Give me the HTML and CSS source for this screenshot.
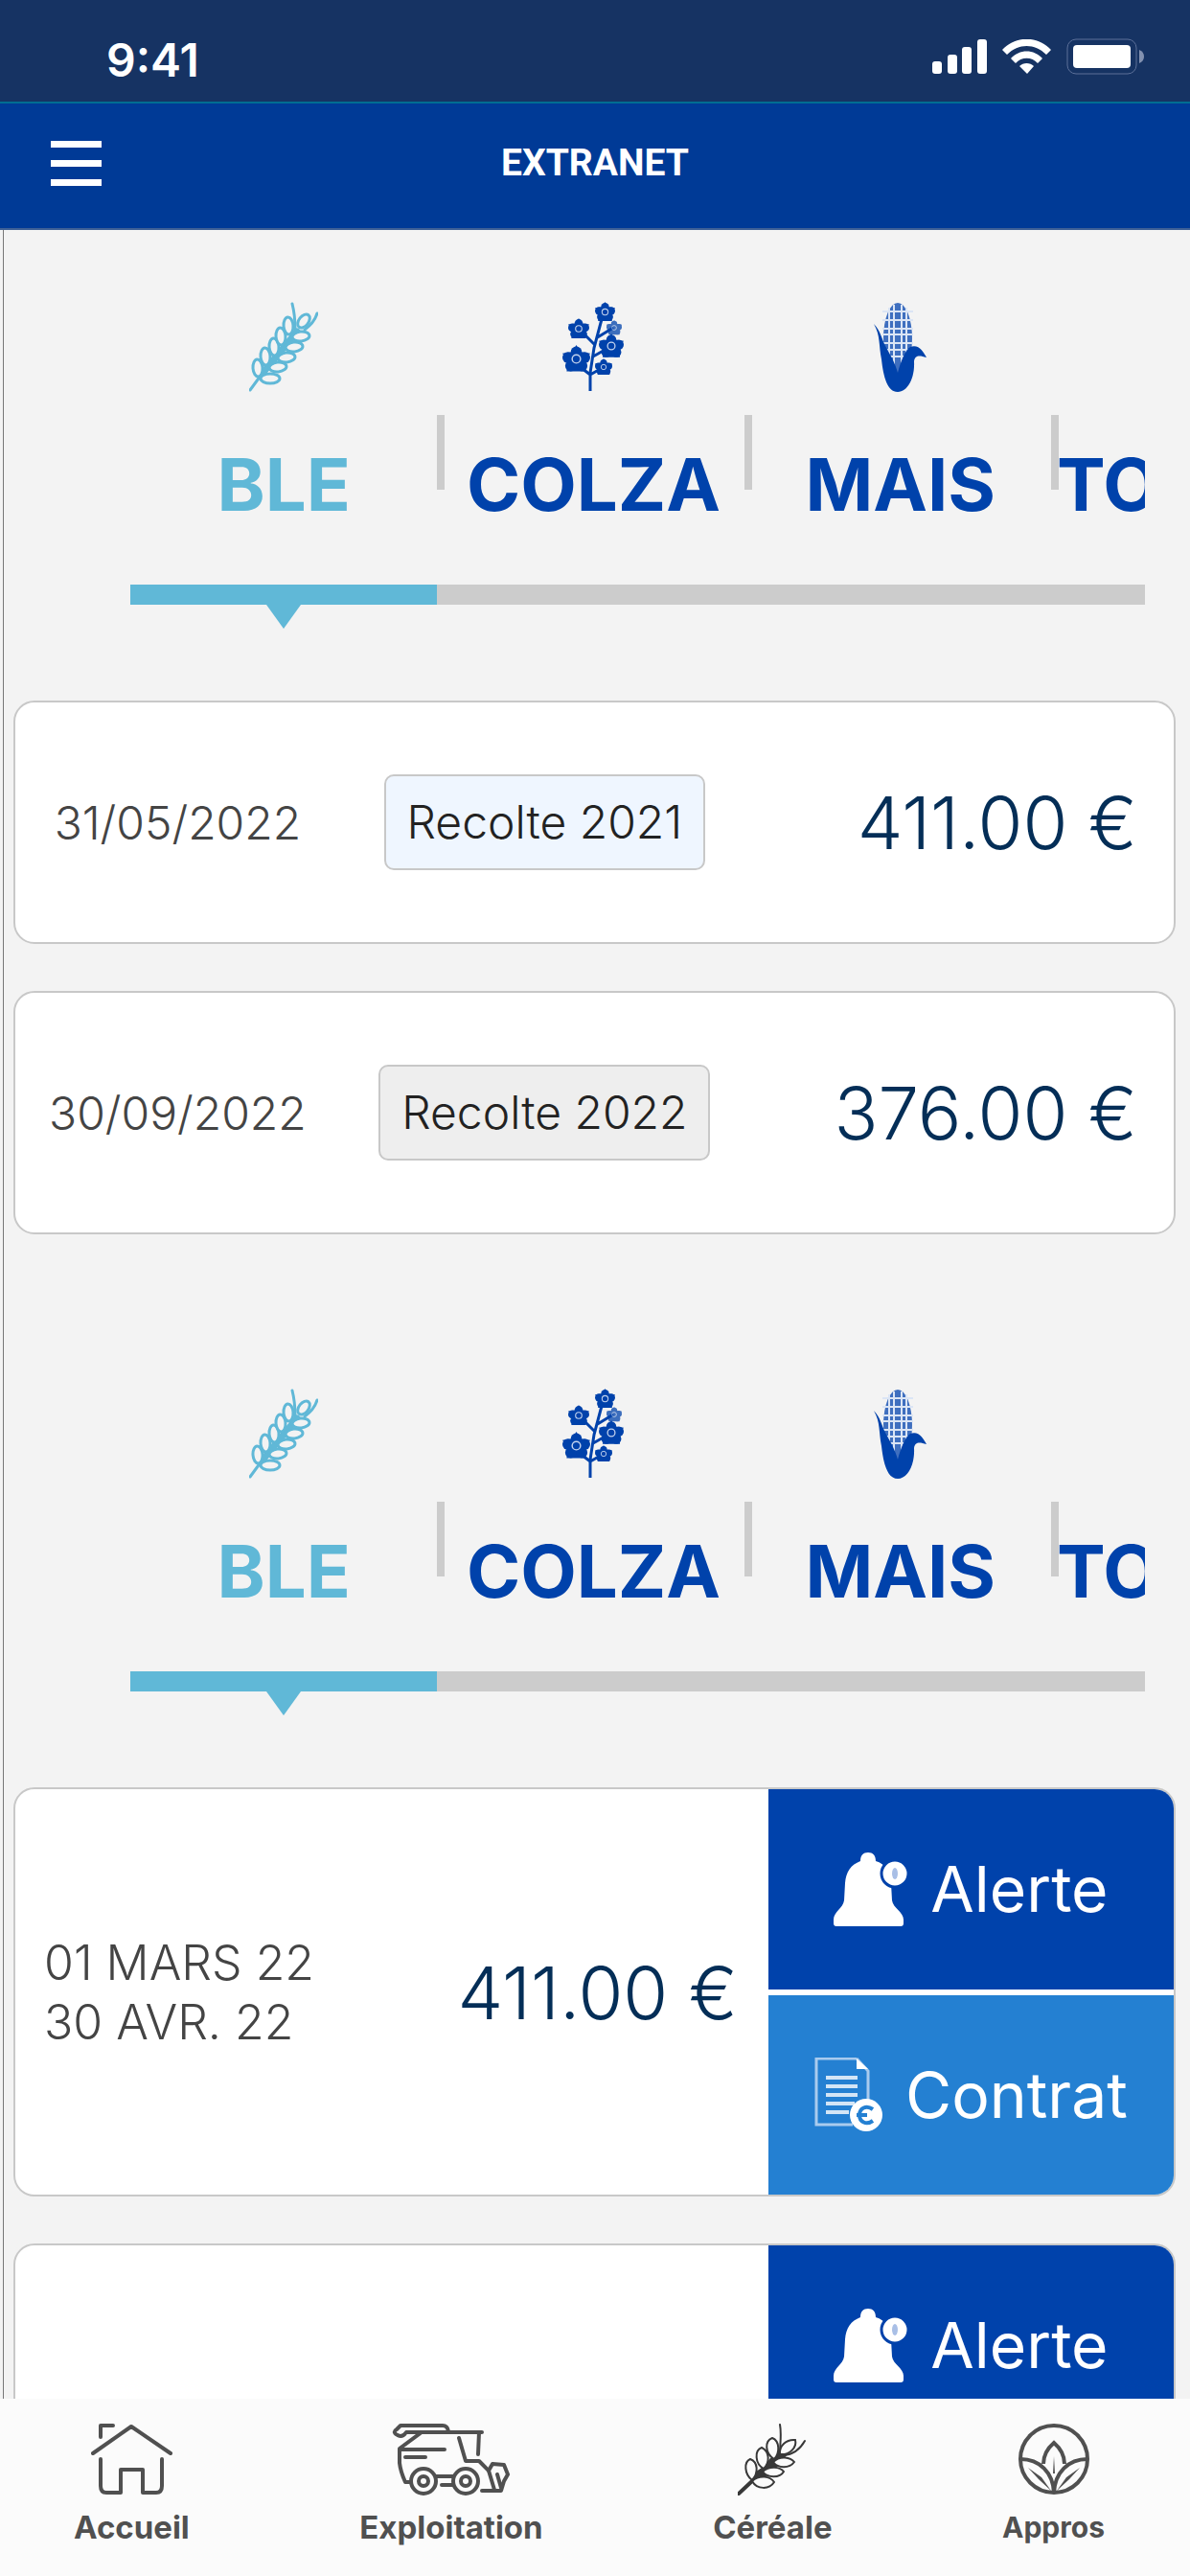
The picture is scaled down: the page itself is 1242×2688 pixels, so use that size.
FILE: index.html
```html
<!DOCTYPE html>
<html lang="fr">
<head>
<meta charset="utf-8">
<meta name="viewport" content="width=device-width, initial-scale=1">
<title>Extranet</title>
<link rel="stylesheet" href="styles.css">
</head>
<body>
<svg class="sprite" aria-hidden="true">
  <symbol id="wheat" viewBox="0 0 72 92">
    <g fill="none" stroke="currentColor" stroke-width="3" stroke-linecap="round">
      <path d="M1 91 12 76M45 1c2 8 3 16 3 26M71 11c-2 7-6 12-13 17"/>
      <path d="M12 76 50 30" stroke-width="7"/>
      <g fill="#f3f3f3">
        <ellipse cx="9" cy="68" rx="5" ry="9" transform="rotate(-4 9 68)"/>
        <ellipse cx="17" cy="56" rx="5" ry="9" transform="rotate(-4 17 56)"/>
        <ellipse cx="26" cy="46" rx="5" ry="9" transform="rotate(-4 26 46)"/>
        <ellipse cx="33" cy="35" rx="5" ry="9" transform="rotate(-4 33 35)"/>
        <ellipse cx="41" cy="24" rx="5" ry="9" transform="rotate(-4 41 24)"/>
        <ellipse cx="22" cy="79" rx="10" ry="5"/>
        <ellipse cx="30" cy="67" rx="9" ry="5" transform="rotate(-6 30 67)"/>
        <ellipse cx="39" cy="57" rx="9" ry="5" transform="rotate(-6 39 57)"/>
        <ellipse cx="47" cy="46" rx="9" ry="5" transform="rotate(-6 47 46)"/>
        <ellipse cx="54" cy="35" rx="9" ry="5" transform="rotate(-6 54 35)"/>
        <ellipse cx="57" cy="19" rx="5" ry="8" transform="rotate(38 57 19)"/>
      </g>
    </g>
  </symbol>
  <symbol id="flower" viewBox="-10 -10 20 20">
    <g fill="currentColor">
      <path d="M0-10 3-5 10-4 6 2 7 9H-7L-6 2-10-4-3-5Z"/>
      <circle cx="0" cy="-5" r="4"/><circle cx="6" cy="-1" r="4"/><circle cx="4" cy="5" r="4"/><circle cx="-4" cy="5" r="4"/><circle cx="-6" cy="-1" r="4"/>
    </g>
    <circle r="3" fill="none" stroke="#c3d3ee" stroke-width="1"/>
  </symbol>
  <symbol id="colza" viewBox="0 0 64 94">
    <path d="M29 93V74L33 48 41 18M29 76 16 66M29 76l14-8M32 57l16-9M34 45 18 29M35 38l18-11" fill="none" stroke="currentColor" stroke-width="3"/>
    <use href="#flower" x="34" y="0" width="21" height="21"/>
    <use href="#flower" x="6" y="17" width="22" height="22"/>
    <use href="#flower" x="46" y="19" width="16" height="16" opacity=".75"/>
    <use href="#flower" x="38" y="33" width="26" height="26"/>
    <use href="#flower" x="0" y="45" width="29" height="29"/>
    <use href="#flower" x="34" y="59" width="18" height="18"/>
  </symbol>
  <symbol id="corn" viewBox="0 0 55 94">
    <ellipse cx="25" cy="38" rx="15" ry="37" fill="#3f6fbf"/>
    <path d="M16 6v56M21 3v66M29 3v66M34 6v50M9 10h32M9 19h32M9 28h32M9 34h32M9 43h32M12 50h26M15 57h20" stroke="#dbe5f5" stroke-width="2" fill="none"/>
    <path fill="currentColor" d="M0 23C7 30 8 38 12 46 17 55 22 63 25 74 28 62 33 50 38 47c9-3 13 4 17 11-7-2-12-3-13 4 1 18-7 32-17 32-11 0-15-16-17-34C5 45 7 35 0 23Z"/>
  </symbol>
  <symbol id="bell" viewBox="0 0 77 77">
    <path fill="#fff" d="M36 0c5 0 8 3 8 9 10 3 16 11 16 23l1 18c1 8 12 12 12 20v4q0 3-3 3H3q-3 0-3-3v-4c0-8 10-12 11-20l1-18C13 20 18 13 28 9c0-6 3-9 8-9Z"/>
    <circle cx="64" cy="22" r="14" fill="#fff" stroke="#0042ab" stroke-width="3"/>
    <ellipse cx="64" cy="22" rx="3" ry="6" fill="#a9bfe6"/>
  </symbol>
  <symbol id="contract" viewBox="0 0 71 77">
    <path d="M44 1H2v69h38M44 1l12 13v34" fill="none" stroke="#a9cbee" stroke-width="3"/>
    <path d="M44 1v11h12Z" fill="#fff"/>
    <path d="M12 21h33M12 30h33M12 39h33M12 48h30M12 57h24" stroke="#d3e5f6" stroke-width="4"/>
    <circle cx="54" cy="60" r="17" fill="#fff"/>
    <path d="M61 54c-7-5-14-1-14 6s7 11 14 6M44 60h11" fill="none" stroke="#2480d2" stroke-width="4"/>
  </symbol>
</svg>

<div class="app">
  <div class="status">
    <time class="clock">9:41</time>
    <div class="status-icons">
      <svg width="57" height="36" viewBox="0 0 57 36" fill="#fff" aria-hidden="true"><rect y="23" width="10" height="13" rx="3"/><rect x="16" y="16" width="10" height="20" rx="3"/><rect x="31" y="8" width="10" height="28" rx="3"/><rect x="47" width="10" height="36" rx="3"/></svg>
      <svg width="51" height="36" viewBox="0 0 51 36" fill="#fff" aria-hidden="true"><path d="M0 11C14-4 37-4 51 11l-5 5C34 4 17 4 5 16Z"/><path d="M9 20c9-10 24-10 33 0l-5 5c-6-7-17-7-23 0Z"/><path d="M18 28c4-4 11-4 15 0l-7 8Z"/></svg>
      <svg width="81" height="38" viewBox="0 0 81 38" aria-hidden="true"><rect x="1" y="1" width="72" height="36" rx="9" fill="none" stroke="#5c7099" stroke-width="1"/><rect x="7" y="7" width="60" height="24" rx="4" fill="#fff"/><path d="M76 12q5 2 5 7t-5 7Z" fill="#8291b0"/></svg>
    </div>
  </div>

  <header class="topbar">
    <button class="menu" type="button" aria-label="Menu"><span></span><span></span><span></span></button>
    <h1 class="title">EXTRANET</h1>
  </header>

  <main class="content">
    <section class="block">
      <div class="tabs">
        <button class="tab active" type="button"><svg class="tab-icon" width="72" height="94"><use href="#wheat"/></svg><span class="tab-label">BLE</span></button>
        <button class="tab" type="button"><svg class="tab-icon" width="64" height="94"><use href="#colza"/></svg><span class="tab-label">COLZA</span></button>
        <button class="tab" type="button"><svg class="tab-icon" width="55" height="94"><use href="#corn"/></svg><span class="tab-label">MAIS</span></button>
        <button class="tab cut" type="button"><span class="tab-label">TO</span></button>
      </div>
      <div class="track"><div class="thumb"></div></div>
      <div class="cards">
        <article class="card harvest">
          <time class="date">31/05/2022</time>
          <span class="chip blue">Recolte 2021</span>
          <span class="price">411.00 €</span>
        </article>
        <article class="card harvest">
          <time class="date">30/09/2022</time>
          <span class="chip">Recolte 2022</span>
          <span class="price">376.00 €</span>
        </article>
      </div>
    </section>

    <section class="block">
      <div class="tabs">
        <button class="tab active" type="button"><svg class="tab-icon" width="72" height="94"><use href="#wheat"/></svg><span class="tab-label">BLE</span></button>
        <button class="tab" type="button"><svg class="tab-icon" width="64" height="94"><use href="#colza"/></svg><span class="tab-label">COLZA</span></button>
        <button class="tab" type="button"><svg class="tab-icon" width="55" height="94"><use href="#corn"/></svg><span class="tab-label">MAIS</span></button>
        <button class="tab cut" type="button"><span class="tab-label">TO</span></button>
      </div>
      <div class="track"><div class="thumb"></div></div>
      <div class="cards">
        <article class="card offer">
          <p class="period">01 MARS 22<br>30 AVR. 22</p>
          <span class="price">411.00 €</span>
          <div class="actions">
            <button class="action alert" type="button"><svg width="77" height="77" aria-hidden="true"><use href="#bell"/></svg>Alerte</button>
            <button class="action contract" type="button"><svg width="71" height="77" aria-hidden="true"><use href="#contract"/></svg>Contrat</button>
          </div>
        </article>
        <article class="card offer">
          <div class="actions">
            <button class="action alert" type="button"><svg width="77" height="77" aria-hidden="true"><use href="#bell"/></svg>Alerte</button>
            <div class="action contract"></div>
          </div>
        </article>
      </div>
    </section>
  </main>

  <nav class="bottom">
    <a class="nav-item" href="#accueil">
      <svg width="85" height="75" viewBox="0 0 85 75" aria-hidden="true"><g fill="none" stroke="currentColor" stroke-width="4" stroke-linecap="round" stroke-linejoin="round"><path d="M10 14V2h13M2 31 42 3l41 28"/><path d="M10 37v28q0 7 6 7h15V48h23v24h14q6 0 6-7V37"/></g></svg>
      <span>Accueil</span>
    </a>
    <a class="nav-item" href="#exploitation">
      <svg width="123" height="75" viewBox="0 0 123 75" aria-hidden="true"><g fill="none" stroke="currentColor" stroke-width="4" stroke-linecap="round" stroke-linejoin="round"><path d="M94 9H15q-4 6-9 3-6-3-1-6L9 2h44q5 0 6 6"/><path d="M31 9 8 26v15q1 9 6 20h6M8 27h47M14 35h21M70 15l7 24h14l10 10M91 9l-1 23M46 55h18M52 64h12"/><circle cx="33" cy="60" r="13"/><circle cx="33" cy="60" r="5"/><circle cx="77" cy="60" r="13"/><circle cx="77" cy="60" r="5"/><path d="m101 49 6 20M94 70h20l3-10 4-7-4-10-12-1-4 7M110 53l4 14"/></g></svg>
      <span>Exploitation</span>
    </a>
    <a class="nav-item" href="#cereale">
      <svg class="dark" width="72" height="75" viewBox="0 0 72 75" aria-hidden="true"><path fill="currentColor" d="M16 60 19 50 28 44 34 36 44 28 52 32 42 44 32 54Z"/><g fill="#fbfbfb" stroke="currentColor" stroke-width="2" stroke-linecap="round"><path d="M1 73 16 59" stroke-width="4"/><path fill="none" d="M44 1c2 10 0 20 0 30M70 18q-8 14-22 15"/><path d="M15 59C7 53 6 40 13 37c8 3 9 14 2 22ZM27 47C18 42 17 28 25 25c8 4 9 15 2 22ZM38 37C28 31 28 18 36 15c8 3 8 16 2 22Z"/><path d="M15 60c8-7 19-5 23 1-5 8-18 8-23-1ZM26 50c7-6 18-5 22 0-4 7-17 7-22 0ZM37 40c7-7 18-5 22 0-5 7-17 7-22 0ZM44 32c-1-9 7-16 16-15 2 8-6 16-16 15Z"/></g></svg>
      <span>Céréale</span>
    </a>
    <a class="nav-item small" href="#appros">
      <svg width="76" height="75" viewBox="0 0 76 75" aria-hidden="true"><g fill="none" stroke="currentColor" stroke-width="4"><circle cx="38" cy="37" r="35"/><path d="M3 37c20 0 34 14 35 35 1-21 15-35 35-35"/><path d="M27 42c0-8 4-16 11-22 7 6 11 14 11 22"/></g><path fill="currentColor" d="m38 34 1 18h-2ZM11 46l14 10 10 14-13-12ZM65 46 51 56 41 70l13-12Z"/></svg>
      <span>Appros</span>
    </a>
  </nav>
</div>
</body>
</html>
```
FILE: styles.css
```css
* { box-sizing: border-box; }

body {
  margin: 0;
  font-family: Inter, "Liberation Sans", sans-serif;
  background: #f3f3f3;
}

button {
  border: 0;
  padding: 0;
  background: none;
  font: inherit;
  color: inherit;
}

svg { display: block; flex: none; }

.sprite { position: absolute; width: 0; height: 0; }

.app {
  display: flex;
  flex-direction: column;
  height: 100vh;
}

/* Status bar and header */
.status {
  display: flex;
  flex: none;
  align-items: center;
  justify-content: space-between;
  height: 108px;
  padding: 12px 48px 0 111px;
  background: #163363;
  border-bottom: 2px solid #006d92;
  color: #fff;
}

.clock { font-size: 48px; line-height: 56px; font-weight: 600; padding-top: 8px; }

.status-icons { display: flex; align-items: center; gap: 16px; }

.topbar {
  display: grid;
  grid-template-columns: 53px 1fr 53px;
  flex: none;
  align-items: center;
  height: 132px;
  padding: 0 53px 6px;
  background: #003a96;
  border-bottom: 2px solid #3f6096;
  color: #fff;
}

.menu { display: grid; gap: 13px; }
.menu span { height: 7px; background: #fff; }

.title {
  margin: 0;
  font-family: Roboto, sans-serif;
  font-size: 39px;
  line-height: 48px;
  font-weight: 700;
  text-align: center;
}

/* Scrolling content */
.content {
  flex: 1;
  min-height: 0;
  overflow-y: auto;
  scrollbar-width: none;
  padding: 75px 15px 0 10px;
  border-left: 1px solid #777;
  margin-left: 3px;
}

.block + .block { margin-top: 161px; }

.tabs {
  display: grid;
  grid-template-columns: 320fr 320fr 320fr 98fr;
  margin: 0 32px 0 122px;
  padding-bottom: 69px;
  overflow: hidden;
}

.tab {
  display: flex;
  flex-direction: column;
  align-items: center;
  justify-content: flex-end;
  min-width: 0;
  gap: 60px;
  color: #0042ab;
}

.tab + .tab {
  padding-left: 6px;
  background: linear-gradient(#ccc, #ccc) no-repeat 0 118px / 8px 78px;
}

.tab.active { color: #60b8d7; }
.tab.cut { align-items: flex-start; overflow: hidden; }

.tab-label { font-size: 76px; line-height: 72px; font-weight: 700; }

.track {
  height: 21px;
  margin: 0 32px 0 122px;
  background: #ccc;
}

.thumb {
  position: relative;
  width: calc(100% * 320 / 1058);
  height: 100%;
  background: #60b8d7;
}

.thumb::after {
  content: "";
  position: absolute;
  top: 100%;
  left: 50%;
  margin-left: -18px;
  border: 18px solid transparent;
  border-top: 25px solid #60b8d7;
  border-bottom: 0;
}

/* Cards */
.cards { display: grid; gap: 49px; margin-top: 100px; }

.card {
  background: #fff;
  border: 2px solid #c8c8c8;
  border-radius: 22px;
  overflow: hidden;
}

.harvest {
  display: grid;
  grid-template-columns: 338fr 426fr 442fr;
  align-items: center;
  justify-items: center;
  height: 254px;
}

.date { color: #444; font-size: 48px; font-weight: 300; }

.chip {
  padding: 0 22px;
  border: 2px solid #c8c8c8;
  border-radius: 10px;
  background: #eee;
  color: #222;
  font-size: 48px;
  line-height: 96px;
  font-weight: 300;
  white-space: nowrap;
}

.chip.blue { background: #eff6ff; }

.price {
  color: #042e57;
  font-size: 76px;
  line-height: 88px;
  font-weight: 300;
  white-space: nowrap;
}

.harvest .price { justify-self: end; padding-right: 38px; }

.offer {
  display: flex;
  align-items: center;
  height: 427px;
}

.period {
  flex: 1;
  margin: 0;
  padding-left: 30px;
  color: #444;
  font-size: 50px;
  line-height: 62px;
  font-weight: 300;
}

.offer .price { padding-right: 32px; }

.actions {
  display: grid;
  grid-template-rows: 1fr 1fr;
  gap: 6px;
  width: 35%;
  height: 100%;
  margin-left: auto;
}

.action {
  display: flex;
  align-items: center;
  justify-content: center;
  gap: 24px;
  color: #fff;
  font-size: 66px;
  line-height: 76px;
}

.alert { background: #0042ab; }
.contract { background: #2480d2; }

/* Bottom navigation */
.bottom {
  display: flex;
  flex: none;
  justify-content: space-between;
  align-items: flex-start;
  height: 185px;
  padding: 26px 89px 0 77px;
  background: #fbfbfb;
}

.nav-item {
  display: flex;
  flex-direction: column;
  align-items: center;
  gap: 14px;
  color: #505050;
  font-size: 33px;
  line-height: 38px;
  font-weight: 700;
  text-decoration: none;
}

.nav-item.small { font-size: 30px; }

.dark { color: #383838; }
```
